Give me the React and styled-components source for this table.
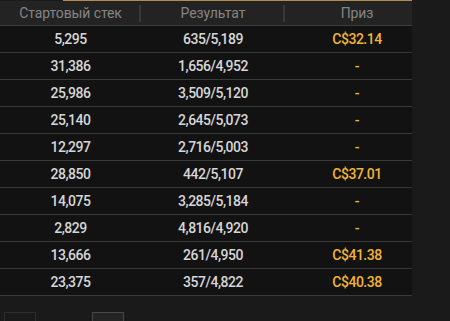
import React from 'react'
import styled, { createGlobalStyle } from 'styled-components'

const rows = [
  { stack: '5,295', result: '635/5,189', prize: 'C$32.14' },
  { stack: '31,386', result: '1,656/4,952', prize: '-' },
  { stack: '25,986', result: '3,509/5,120', prize: '-' },
  { stack: '25,140', result: '2,645/5,073', prize: '-' },
  { stack: '12,297', result: '2,716/5,003', prize: '-' },
  { stack: '28,850', result: '442/5,107', prize: 'C$37.01' },
  { stack: '14,075', result: '3,285/5,184', prize: '-' },
  { stack: '2,829', result: '4,816/4,920', prize: '-' },
  { stack: '13,666', result: '261/4,950', prize: 'C$41.38' },
  { stack: '23,375', result: '357/4,822', prize: 'C$40.38' },
]

const App = () => (
  <>
    <GlobalStyle />
    <Panel>
      <TabLine />
      <Table>
        <HeaderRow>
          <HeadCell divider>Стартовый стек</HeadCell>
          <HeadCell divider>Результат</HeadCell>
          <HeadCell>Приз</HeadCell>
        </HeaderRow>
        {rows.map((row, i) => (
          <Row key={i}>
            <Cell>{row.stack}</Cell>
            <Cell>{row.result}</Cell>
            <Cell prize>{row.prize}</Cell>
          </Row>
        ))}
      </Table>
      <Pager>
        <PageButton />
        <PageButton active />
      </Pager>
    </Panel>
  </>
)

const GlobalStyle = createGlobalStyle`
  html, body {
    overflow: hidden;
  }

  body {
    margin: 0;
    background: #1a1a1a;
    font-family: Roboto, "Liberation Sans", sans-serif;
  }
`

const Panel = styled.div`
  width: 412px;
  overflow: hidden;
`

const TabLine = styled.div`
  height: 1px;
  margin-left: 63px;
  background: #b08d4f;
`

const Table = styled.div`
  width: 429px;
`

const grid = `
  display: grid;
  grid-template-columns: 141px 144px 144px;
`

const HeaderRow = styled.div`
  ${grid}
  height: 24px;
  background: #232323;
  border-bottom: 1px solid #3e3e3e;
`

const HeadCell = styled.div`
  position: relative;
  display: flex;
  align-items: center;
  justify-content: center;
  font-size: 14px;
  letter-spacing: -0.1px;
  color: #858585;

  ${({ divider }) => divider && `
    &::after {
      content: '';
      position: absolute;
      right: 0;
      top: 4px;
      bottom: 3px;
      width: 2px;
      background: #383838;
    }
  `}
`

const Row = styled.div`
  ${grid}
  height: 26px;
  background: #121212;
  border-bottom: 1px solid #3a3a3a;
`

const Cell = styled.div`
  display: flex;
  align-items: center;
  justify-content: center;
  font-size: 14px;
  font-weight: 500;
  letter-spacing: -0.5px;
  color: ${({ prize }) => (prize ? '#f2b530' : '#d6d6d6')};
`

const Pager = styled.div`
  display: flex;
  gap: 56px;
  padding: 16px 0 0 4px;
`

const PageButton = styled.div`
  width: 30px;
  height: 30px;
  border: 1px solid ${({ active }) => (active ? '#464646' : '#2e2e2e')};
  background: ${({ active }) => (active ? '#242424' : 'transparent')};
`

export default App
